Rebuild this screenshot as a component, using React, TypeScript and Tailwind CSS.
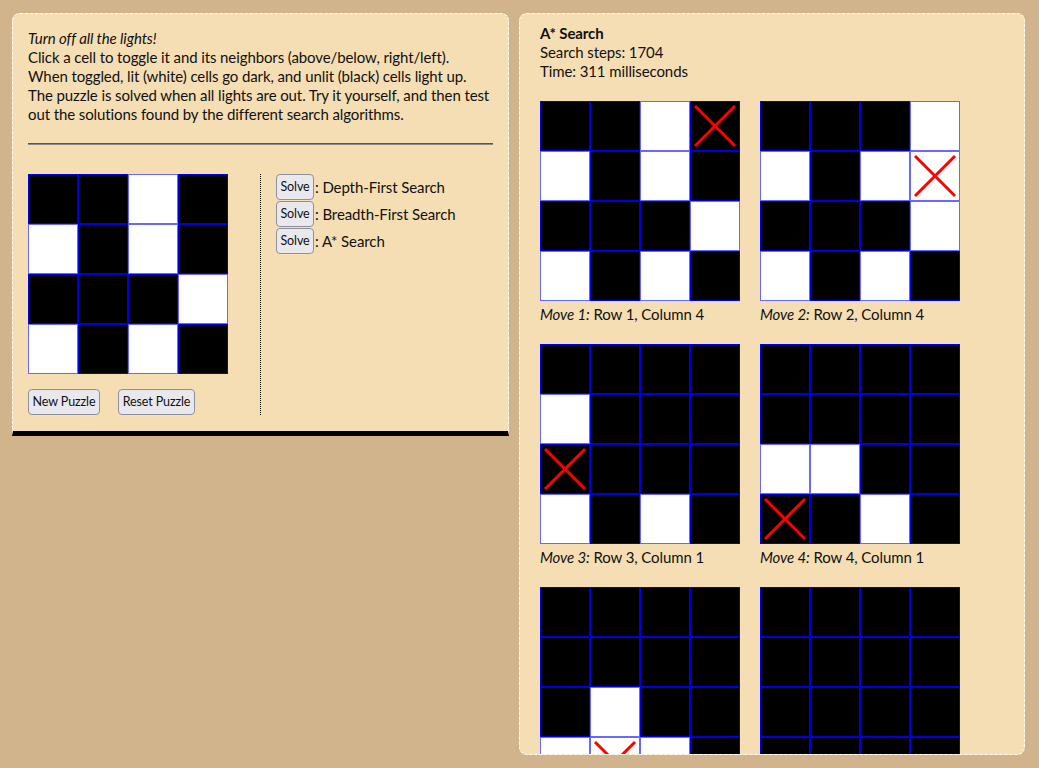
import React from "react";

type Grid = number[][];

const initial: Grid = [
  [0, 0, 1, 0],
  [1, 0, 1, 0],
  [0, 0, 0, 1],
  [1, 0, 1, 0],
];

const moves: { grid: Grid; mark: [number, number]; caption?: [string, string] }[] = [
  {
    grid: initial,
    mark: [0, 3],
    caption: ["Move 1:", " Row 1, Column 4"],
  },
  {
    grid: [
      [0, 0, 0, 1],
      [1, 0, 1, 1],
      [0, 0, 0, 1],
      [1, 0, 1, 0],
    ],
    mark: [1, 3],
    caption: ["Move 2:", " Row 2, Column 4"],
  },
  {
    grid: [
      [0, 0, 0, 0],
      [1, 0, 0, 0],
      [0, 0, 0, 0],
      [1, 0, 1, 0],
    ],
    mark: [2, 0],
    caption: ["Move 3:", " Row 3, Column 1"],
  },
  {
    grid: [
      [0, 0, 0, 0],
      [0, 0, 0, 0],
      [1, 1, 0, 0],
      [0, 0, 1, 0],
    ],
    mark: [3, 0],
    caption: ["Move 4:", " Row 4, Column 1"],
  },
  {
    grid: [
      [0, 0, 0, 0],
      [0, 0, 0, 0],
      [0, 1, 0, 0],
      [1, 1, 1, 0],
    ],
    mark: [3, 1],
  },
  {
    grid: [
      [0, 0, 0, 0],
      [0, 0, 0, 0],
      [0, 0, 0, 0],
      [0, 0, 0, 0],
    ],
    mark: [-1, -1],
  },
];

function Cross() {
  return (
    <svg width="48" height="48" viewBox="0 0 48 48" className="block">
      <line x1="4" y1="4" x2="44" y2="44" stroke="#ff0000" strokeWidth="3" />
      <line x1="44" y1="4" x2="4" y2="44" stroke="#ff0000" strokeWidth="3" />
    </svg>
  );
}

function Board({ grid, mark }: { grid: Grid; mark?: [number, number] }) {
  return (
    <div className="grid grid-cols-[50px_50px_50px_50px] w-[200px] h-[200px]">
      {grid.map((row, r) =>
        row.map((v, c) => (
          <div
            key={`${r}-${c}`}
            className={
              v
                ? "w-[50px] h-[50px] border border-[#6868ff] bg-white"
                : "w-[50px] h-[50px] border border-[#0000e6] bg-black"
            }
          >
            {mark && mark[0] === r && mark[1] === c ? <Cross /> : null}
          </div>
        ))
      )}
    </div>
  );
}

const btn =
  "h-[26px] px-[3px] text-[12.5px] leading-none whitespace-nowrap text-[#111] bg-[#e9e9ed] border border-[#8f8f9d] rounded-[4px]";

export default function App() {
  return (
    <div className="min-h-screen w-full bg-[#d2b48c] font-['Lato',sans-serif] text-[#111] tracking-[-0.1px] flex items-start gap-[10px] pl-[12px] pt-[13px]">
      <div className="w-[497px] bg-[#f5deb3] border border-dashed border-white border-b-[5px] border-b-black [border-bottom-style:solid] rounded-t-[8px] px-[15px] pt-[15px] pb-[16px]">
        <div className="text-[15px] leading-[19px] whitespace-nowrap">
          <div className="italic">Turn off all the lights!</div>
          <div>Click a cell to toggle it and its neighbors (above/below, right/left).</div>
          <div>When toggled, lit (white) cells go dark, and unlit (black) cells light up.</div>
          <div>The puzzle is solved when all lights are out. Try it yourself, and then test</div>
          <div>out the solutions found by the different search algorithms.</div>
        </div>
        <div className="mt-[19px] border-t border-t-[#555] border-b border-b-[#8a8a8a]" />
        <div className="mt-[29px] flex">
          <div className="w-[233px] border-r border-dotted border-black">
            <Board grid={initial} />
            <div className="mt-[15px] flex gap-[18px]">
              <button className={btn + " w-[72px]"}>New Puzzle</button>
              <button className={btn + " w-[77px]"}>Reset Puzzle</button>
            </div>
          </div>
          <div className="pl-[15px] flex flex-col gap-[1px] text-[15px]">
            {["Depth-First Search", "Breadth-First Search", "A* Search"].map((s) => (
              <div key={s} className="flex items-center">
                <button className={btn + " w-[38px]"}>Solve</button>
                <span className="ml-[1px]">: {s}</span>
              </div>
            ))}
          </div>
        </div>
      </div>

      <div className="w-[506px] h-[742px] overflow-hidden bg-[#f5deb3] border border-dashed border-white rounded-[8px] px-[20px] pt-[10px]">
        <div className="text-[15px] leading-[19px]">
          <div className="font-bold">A* Search</div>
          <div>Search steps: 1704</div>
          <div>Time: 311 milliseconds</div>
        </div>
        <div className="mt-[20px] grid grid-cols-[200px_200px] gap-x-[20px] gap-y-[20px]">
          {moves.map((m, i) => (
            <div key={i}>
              <Board grid={m.grid} mark={m.mark} />
              {m.caption ? (
                <div className="mt-[4px] text-[15px] leading-[19px]">
                  <span className="italic">{m.caption[0]}</span>
                  {m.caption[1]}
                </div>
              ) : null}
            </div>
          ))}
        </div>
      </div>
    </div>
  );
}
